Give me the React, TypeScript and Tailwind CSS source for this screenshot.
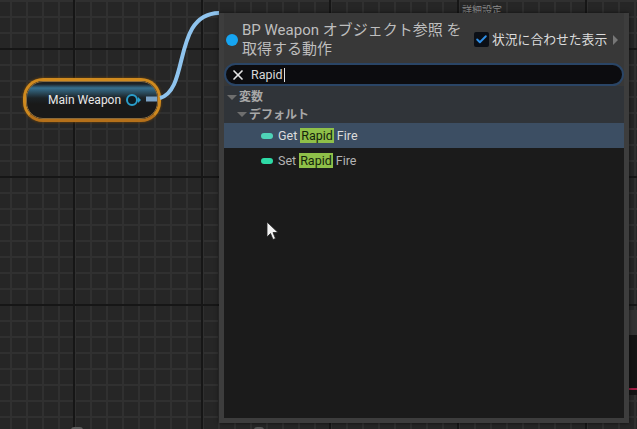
import { Check, X } from "lucide-react"

function ActionRow({ verb, selected, pin }: { verb: string; selected?: boolean; pin: string }) {
  return (
    <div className={`flex h-[25px] items-center pl-[37px] text-[12.5px] leading-[15px] ${selected ? "bg-[#3c4e63] text-[#dcdcdc]" : "text-[#b4b4b4]"}`}>
      <span className={`h-[6px] w-[12px] rounded-full ${pin}`} />
      <span className="ml-[5px]">{verb}</span>
      <span className="mx-[3px] bg-[#8fc049] px-[1px] text-[#14240c]">Rapid</span>
      <span>Fire</span>
    </div>
  )
}

function BlueprintPanel() {
  return (
    <div className="absolute left-[219px] top-[13px] flex h-[410px] w-[410px] flex-col border-[5px] border-t-0 border-[#3d3d3d] bg-[#383838] shadow-[0_0_4px_rgba(0,0,0,0.6)]">
      <div className="flex h-[50px] shrink-0 items-center pt-[3px]">
        <span className="ml-[2px] h-[12px] w-[12px] shrink-0 rounded-full bg-[#16a5f2]" />
        <div className="ml-[4px] w-[230px] whitespace-nowrap text-[15px] leading-[19px] text-[#bebebe]">
          BP Weapon オブジェクト参照 を
          <br />
          取得する動作
        </div>
        <span className="ml-[2px] flex h-[15px] w-[15px] shrink-0 items-center justify-center rounded-[2px] bg-[#0b0f16]">
          <Check size={13} strokeWidth={3.5} className="text-[#2f8fe6]" />
        </span>
        <span className="ml-[3px] whitespace-nowrap text-[12.8px] text-[#dcdcdc]">状況に合わせた表示</span>
        <span className="ml-[6px] h-0 w-0 border-y-[5px] border-l-[5px] border-y-transparent border-l-[#777777]" />
      </div>
      <div className="flex h-[23px] shrink-0 items-center rounded-full border-2 border-[#2a4566] bg-[#0c0c0f] pl-[4px] text-[12.5px] text-[#d8d8d8]">
        <X size={16} strokeWidth={2.5} className="text-[#e6e6e6]" />
        <span className="ml-[5px] border-r border-[#e0e0e0] pr-[1px] leading-[14px]">Rapid</span>
      </div>
      <div className="flex flex-1 flex-col">
        <div className="bg-[#303439]">
          <div className="flex h-[20px] items-center pt-[2px] text-[12px] font-bold text-[#a8a8a8]">
            <span className="ml-[3px] mr-[2px] h-0 w-0 border-x-[5px] border-t-[5px] border-x-transparent border-t-[#6e6e6e]" />
            変数
          </div>
          <div className="flex h-[17px] items-center text-[12px] font-bold text-[#a8a8a8]">
            <span className="ml-[13px] mr-[2px] h-0 w-0 border-x-[5px] border-t-[5px] border-x-transparent border-t-[#6e6e6e]" />
            デフォルト
          </div>
        </div>
        <div className="flex-1 bg-[#1b1b1b]">
          <ActionRow verb="Get" selected pin="bg-[#4fd3b8]" />
          <ActionRow verb="Set" pin="bg-[#2edaa6]" />
        </div>
      </div>
    </div>
  )
}

export default function App() {
  return (
    <div className="relative h-[429px] w-[637px] overflow-hidden bg-[#262626] bg-[linear-gradient(#161616_2px,transparent_2px),linear-gradient(90deg,#161616_2px,transparent_2px),linear-gradient(#303030_2px,transparent_2px),linear-gradient(90deg,#303030_2px,transparent_2px)] bg-[size:128px_128px,128px_128px,16px_16px,16px_16px] bg-[position:73px_48px,73px_48px,10px_0px,10px_0px] font-['Roboto','Noto_Sans_CJK_JP',sans-serif]">
      {/* variable node */}
      <div className="absolute left-[23px] top-[78px] h-[44px] w-[138px] rounded-[20px] border-[3px] border-[#cf8a1f] border-b-[#b5701a] bg-[#1a1a1a] shadow-[0_0_3px_#7a4a08]">
        <div className="flex h-full items-center rounded-[17px] border border-[#8a6a3a] bg-[linear-gradient(#1c2226_2px,#37708e_6px,#1c2327_16px,#191919_22px)] pl-[21px] text-[12px] text-[#e8e8e8]">
          <span>Main Weapon</span>
          <span className="ml-[5px] h-[12px] w-[12px] rounded-full border-2 border-[#2a9ecb] bg-[#0e1a20]" />
          <span className="h-0 w-0 border-y-[3px] border-l-[3px] border-y-transparent border-l-[#2a9ecb]" />
        </div>
      </div>

      {/* wire between the pin and the panel */}
      <svg className="absolute left-0 top-0" width="637" height="429">
        <path d="M160 98 C190 90 172 14 219 13" fill="none" stroke="#8fc4ee" strokeWidth="4" />
        <path d="M146 99 L157 99" fill="none" stroke="#7ba3c6" strokeWidth="5" />
      </svg>

      {/* panel behind the menu */}
      <div className="absolute left-[462px] top-[5px] text-[10px] leading-[12px] text-[#8a8a8a]">詳細設定</div>
      <div className="absolute left-[629px] top-[310px] h-[25px] w-[8px] bg-[#333333]" />
      <div className="absolute left-[629px] top-[335px] h-[60px] w-[8px] bg-[#141414]">
        <div className="mt-[53px] h-[2px] bg-[#a01f45]" />
      </div>

      <BlueprintPanel />

      {/* mouse pointer */}
      <svg className="absolute left-[266px] top-[221px]" width="13" height="20" viewBox="0 0 13 20">
        <path d="M1 1 L1 16 L4.5 12.5 L7 18.5 L9.5 17.5 L7 11.5 L12 11.5 Z" fill="#f2f2f2" stroke="#222222" strokeWidth="0.8" />
      </svg>

      {/* tops of nodes cut off at the bottom edge */}
      <div className="absolute left-[71px] top-[427px] h-[6px] w-[12px] rounded-full bg-[#5c5c5c]" />
      <div className="absolute left-[254px] top-[427px] h-[6px] w-[10px] rounded-full bg-[#555555]" />
    </div>
  )
}
